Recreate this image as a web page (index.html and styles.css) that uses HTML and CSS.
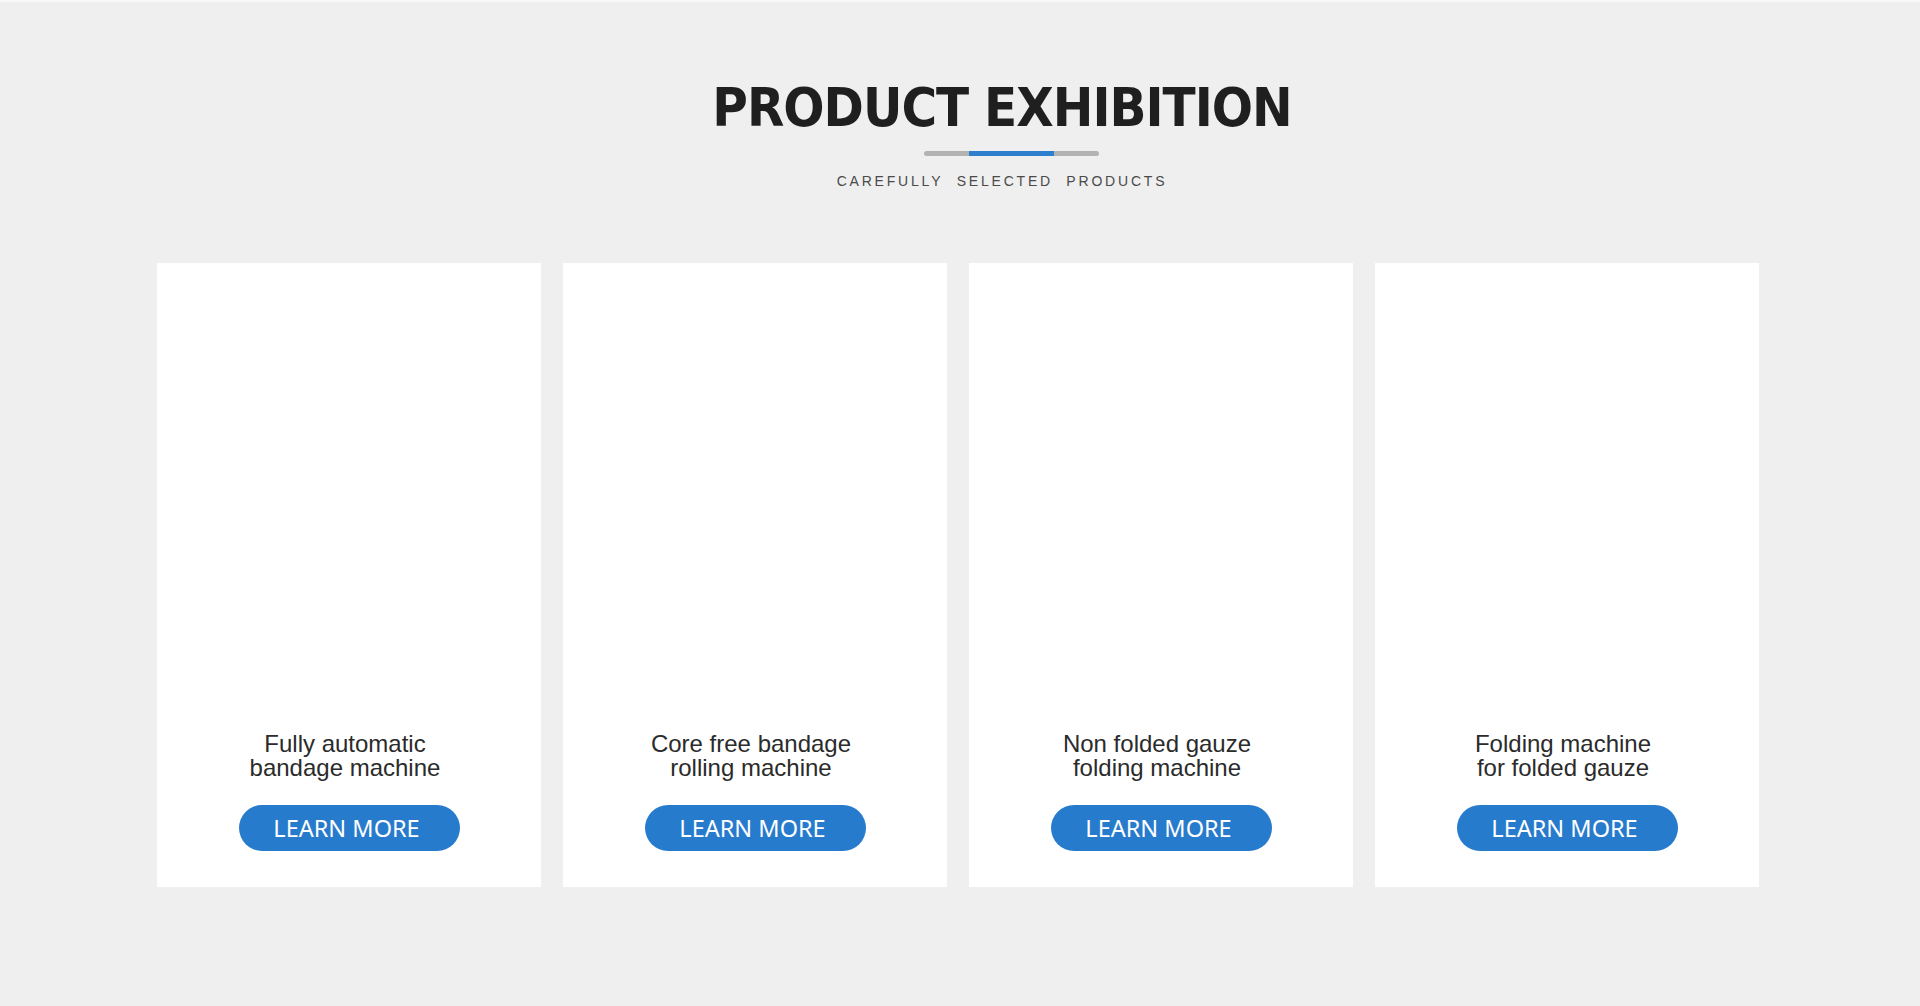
FILE: index.html
```html
<!DOCTYPE html>
<html lang="en">
<head>
<meta charset="utf-8">
<title>Product Exhibition</title>
<link rel="stylesheet" href="styles.css">
</head>
<body>
<section class="exhibition">
  <header class="heading">
    <h1 class="heading-title">PRODUCT EXHIBITION</h1>
    <div class="heading-rule"><span class="heading-rule-accent"></span></div>
    <p class="heading-sub">CAREFULLY&nbsp; SELECTED&nbsp; PRODUCTS</p>
  </header>
  <div class="cards">
    <div class="card">
      <p class="card-name">Fully automatic<br>bandage machine</p>
      <a class="card-btn" href="#">LEARN MORE</a>
    </div>
    <div class="card">
      <p class="card-name">Core free bandage<br>rolling machine</p>
      <a class="card-btn" href="#">LEARN MORE</a>
    </div>
    <div class="card">
      <p class="card-name">Non folded gauze<br>folding machine</p>
      <a class="card-btn" href="#">LEARN MORE</a>
    </div>
    <div class="card">
      <p class="card-name">Folding machine<br>for folded gauze</p>
      <a class="card-btn" href="#">LEARN MORE</a>
    </div>
  </div>
</section>
</body>
</html>
```

FILE: styles.css
```css
html, body {
  margin: 0;
  padding: 0;
}
body {
  background: #efefef;
  border-top: 2px solid #f8f8f8;
  font-family: "Liberation Sans", Arial, sans-serif;
  height: 1004px;
  overflow: hidden;
}
.exhibition {
  padding-top: 80px;
}
.heading {
  display: flex;
  flex-direction: column;
  align-items: center;
  padding-left: 84px;
}
.heading-title {
  margin: 0;
  font-family: "Liberation Sans Narrow", "DejaVu Sans Condensed", "Liberation Sans", sans-serif;
  font-weight: 700;
  font-size: 54px;
  line-height: 52px;
  color: #1f1f1f;
  letter-spacing: -1px;
}
.heading-rule {
  margin-top: 17px;
  margin-left: 18px;
  width: 175px;
  height: 5px;
  border-radius: 2.5px;
  background: #b3b3b3;
  display: flex;
  justify-content: center;
}
.heading-rule-accent {
  display: block;
  width: 85px;
  height: 5px;
  background: #2e7fce;
}
.heading-sub {
  margin: 17px 0 0;
  font-size: 14px;
  line-height: 16px;
  letter-spacing: 2.8px;
  color: #4a4a4a;
}
.cards {
  display: flex;
  gap: 22px;
  padding-left: 157px;
  margin-top: 74px;
}
.card {
  width: 384px;
  height: 624px;
  box-sizing: border-box;
  background: #fff;
  display: flex;
  flex-direction: column;
  justify-content: flex-end;
  align-items: center;
  padding-bottom: 36px;
}
.card-name {
  margin: 0 0 25px;
  padding-right: 8px;
  text-align: center;
  font-size: 24px;
  line-height: 24px;
  color: #2b2b2b;
}
.card-btn {
  display: flex;
  align-items: center;
  justify-content: center;
  box-sizing: border-box;
  width: 221px;
  height: 46px;
  padding-right: 5px;
  border-radius: 23px;
  background: #277bcc;
  color: #fff;
  text-decoration: none;
  font-family: "Noto Sans", "Open Sans", sans-serif;
  font-size: 23.5px;
}
```
